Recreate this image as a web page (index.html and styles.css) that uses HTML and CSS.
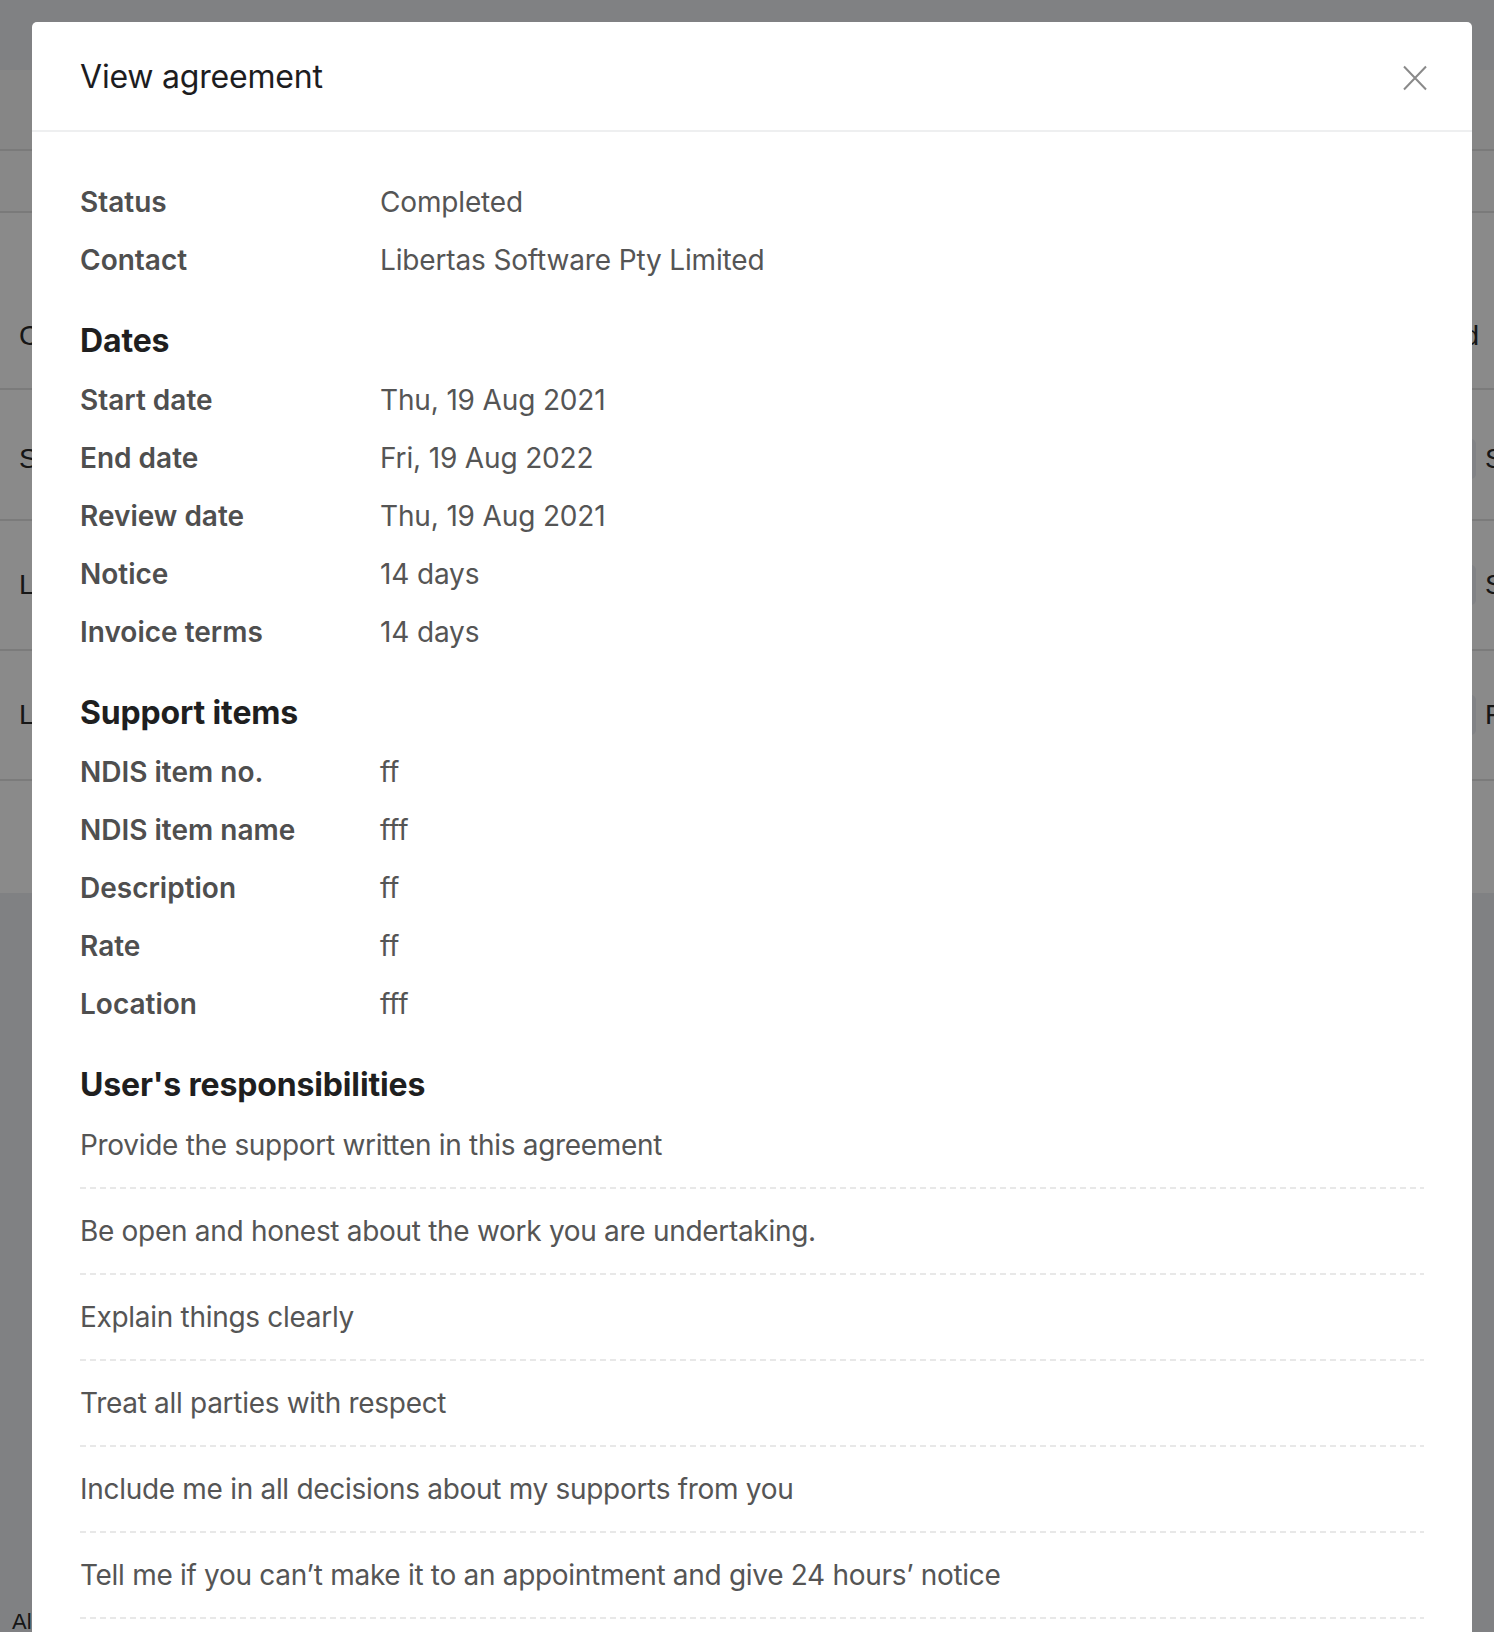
FILE: index.html
```html
<!DOCTYPE html>
<html lang="en">
<head>
<meta charset="utf-8">
<title>View agreement</title>
<link rel="stylesheet" href="styles.css">
</head>
<body>
<div class="page">
  <div class="topbar"></div>
  <div class="toolbar"></div>
  <div class="thead"></div>
  <div class="trow trow-title"><span class="cell-l">Client</span><span class="cell-r">Signed</span></div>
  <div class="trow trow-first"><span class="cell-l">Service agreement</span><span class="cell-r"><span class="badge"></span><span class="cell-text">Sent</span></span></div>
  <div class="trow"><span class="cell-l">Libertas Software</span><span class="cell-r"><span class="badge"></span><span class="cell-text">Sent</span></span></div>
  <div class="trow"><span class="cell-l">Libertas Software</span><span class="cell-r"><span class="badge"></span><span class="cell-text">Finished</span></span></div>
  <div class="tfoot"></div>
  <div class="lower"><span class="lower-text">All agreements</span></div>
</div>
<div class="backdrop"></div>
<div class="modal" role="dialog" aria-labelledby="modal-title">
  <header class="modal-header">
    <h1 class="modal-title" id="modal-title">View agreement</h1>
    <button class="close" type="button" aria-label="Close">
      <svg width="24" height="26" viewBox="0 0 24 26" aria-hidden="true"><path d="M1 1.5 L23 24.5 M23 1.5 L1 24.5" fill="none" stroke="currentColor" stroke-width="2"/></svg>
    </button>
  </header>
  <div class="modal-body">
    <dl class="details">
      <dt>Status</dt><dd>Completed</dd>
      <dt>Contact</dt><dd>Libertas Software Pty Limited</dd>
    </dl>
    <section class="section">
      <h2 class="section-title">Dates</h2>
      <dl class="details">
        <dt>Start date</dt><dd>Thu, 19 Aug 2021</dd>
        <dt>End date</dt><dd>Fri, 19 Aug 2022</dd>
        <dt>Review date</dt><dd>Thu, 19 Aug 2021</dd>
        <dt>Notice</dt><dd>14 days</dd>
        <dt>Invoice terms</dt><dd>14 days</dd>
      </dl>
    </section>
    <section class="section">
      <h2 class="section-title">Support items</h2>
      <dl class="details">
        <dt>NDIS item no.</dt><dd>ff</dd>
        <dt>NDIS item name</dt><dd>fff</dd>
        <dt>Description</dt><dd>ff</dd>
        <dt>Rate</dt><dd>ff</dd>
        <dt>Location</dt><dd>fff</dd>
      </dl>
    </section>
    <section class="section">
      <h2 class="section-title section-title--flush">User's responsibilities</h2>
      <ul class="resp-list">
        <li>Provide the support written in this agreement</li>
        <li>Be open and honest about the work you are undertaking.</li>
        <li>Explain things clearly</li>
        <li>Treat all parties with respect</li>
        <li>Include me in all decisions about my supports from you</li>
        <li>Tell me if you can’t make it to an appointment and give 24 hours’ notice</li>
        <li>Provide me with invoices for the supports delivered</li>
      </ul>
    </section>
  </div>
</div>
</body>
</html>
```

FILE: styles.css
```css
* {
  box-sizing: border-box;
}

html,
body {
  margin: 0;
  height: 100%;
  overflow: hidden;
}

body {
  position: relative;
  background: #ffffff;
  font-family: Inter, "Noto Sans", sans-serif;
}

/* underlying page */
.page {
  font-family: "Liberation Sans", Arial, sans-serif;
  font-size: 28px;
  color: #2a2a2a;
}

.topbar {
  height: 70px;
  background: #eceef2;
}

.toolbar {
  height: 81px;
  background: #f7f7f7;
  border-bottom: 2px solid #e2e2e2;
}

.thead {
  height: 62px;
  background: #fbfbfb;
  border-bottom: 2px solid #e2e2e2;
}

.trow {
  height: 130px;
  display: flex;
  align-items: center;
  border-bottom: 2px solid #e4e4e4;
  background: #ffffff;
}

.trow-title {
  height: 177px;
  align-items: flex-start;
  padding-top: 107px;
}

.trow-first {
  height: 131px;
  padding-top: 8px;
}

.cell-l {
  padding-left: 19px;
  white-space: nowrap;
}

.cell-r {
  margin-left: auto;
  width: 28px;
  display: flex;
  align-items: center;
  gap: 9px;
  white-space: nowrap;
}

.trow-title .cell-r {
  width: auto;
  padding-right: 15px;
}

.badge {
  flex: none;
  width: 10px;
  height: 40px;
  border-radius: 6px;
  background: #eef0f6;
}

.tfoot {
  height: 112px;
  background: #ffffff;
}

.lower {
  height: 800px;
  background: #eceef2;
  padding-top: 716px;
}

.lower-text {
  display: block;
  padding-left: 12px;
  font-size: 22px;
  white-space: nowrap;
}

.backdrop {
  position: fixed;
  inset: 0;
  background: rgba(0, 0, 0, 0.46);
}

/* modal */
.modal {
  position: absolute;
  top: 22px;
  left: 32px;
  width: 1440px;
  background: #ffffff;
  border-radius: 5px 5px 0 0;
}

.modal-header {
  height: 110px;
  display: flex;
  align-items: center;
  justify-content: space-between;
  padding: 0 45px 0 48px;
  border-bottom: 2px solid #eeeff0;
}

.modal-title {
  margin: 0;
  margin-top: 2px;
  font-size: 32px;
  font-weight: 400;
  line-height: 42px;
  letter-spacing: -0.2px;
  color: #1d1d1f;
}

.close {
  margin-top: 4px;
  padding: 0;
  border: 0;
  background: none;
  color: #8a8a8a;
  display: flex;
}

.modal-body {
  padding: 41px 48px 0;
}

.details {
  margin: 0;
  display: grid;
  grid-template-columns: 300px 1fr;
  font-size: 28px;
  line-height: 58px;
}

.details dt {
  font-weight: 600;
  color: #4f4f4f;
}

.details dd {
  margin: 0;
  color: #555555;
  letter-spacing: -0.15px;
}

.section-title {
  margin: 32px 0 10px;
  font-size: 32px;
  line-height: 40px;
  font-weight: 700;
  letter-spacing: -0.15px;
  color: #1f1f1f;
}

.section-title--flush {
  margin-bottom: 0;
}

.resp-list {
  margin: 0;
  padding: 0;
  list-style: none;
}

.resp-list li {
  padding: 19px 0 25px;
  font-size: 28px;
  line-height: 42px;
  letter-spacing: -0.3px;
  color: #555555;
  background-image: linear-gradient(to right, #e8e8e8 60%, transparent 60%);
  background-size: 10px 2px;
  background-repeat: repeat-x;
  background-position: left 0 bottom 2px;
}
```
